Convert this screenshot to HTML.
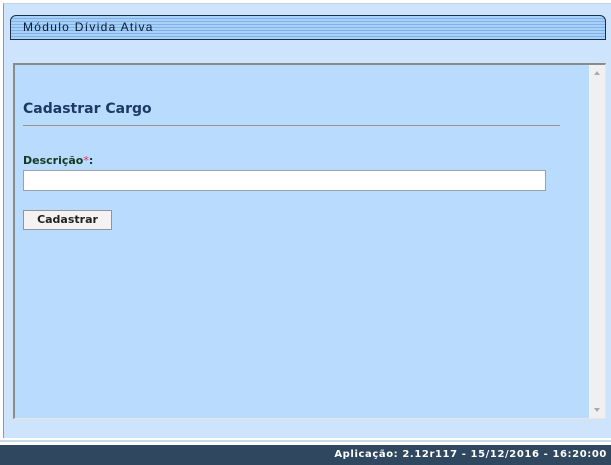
<html><head><style>
body{margin:0;width:611px;height:465px;background:#fff;position:relative;overflow:hidden;font-family:"Liberation Sans",sans-serif}
.outer{position:absolute;left:3px;top:3px;width:620px;height:434px;background:#cde4fc;border-left:1px solid #8a9bb0;border-top:1px solid #c0d8ea}
.hdr{position:absolute;left:10px;top:15px;width:594px;height:23px;border:1px solid #1b2f4a;border-radius:6px 6px 0 0;background:repeating-linear-gradient(#a9d0f6 0,#a9d0f6 2px,#7fb2e8 2px,#7fb2e8 3px)}
.hdr span{position:absolute;left:12px;top:4px;font-size:12px;letter-spacing:1.3px;color:#0a1a33}
.frame{position:absolute;left:13px;top:63px;width:590px;height:353px;background:#b9dbfd;border-left:2px solid #8b8b8b;border-top:2px solid #8b8b8b;border-right:1px solid #e6e6e6;border-bottom:1px solid #e6e6e6}
.sb{position:absolute;right:0;top:0;width:16px;height:353px;background:#f0f0f0}
h1{position:absolute;left:8px;top:36px;margin:0;font-family:"DejaVu Sans",sans-serif;font-size:14px;color:#1b3b63;font-weight:bold}
.hr{position:absolute;left:8px;top:60px;width:537px;height:1px;background:#8e969e;border-bottom:1px solid #d0d8e0}
.lbl{position:absolute;left:8px;top:89px;font-family:"DejaVu Sans",sans-serif;font-size:11px;font-weight:bold;color:#13391f}
.lbl i{color:#e0305a;font-style:normal;font-weight:normal}
.inp{position:absolute;left:8px;top:105px;width:521px;height:19px;background:#fff;border:1px solid #9aa3ad}
.btn{position:absolute;left:8px;top:145px;width:87px;height:18px;background:#f4f2f2;border:1px solid #8f959b;font-family:"DejaVu Sans",sans-serif;font-size:11px;font-weight:bold;color:#222;text-align:center;line-height:18px}
.foot{position:absolute;left:0;top:445px;width:607px;height:20px;padding-right:4px;background:#2f475f;color:#fff;font-family:"DejaVu Sans",sans-serif;font-size:10px;font-weight:bold;letter-spacing:0.6px;text-align:right;line-height:20px}
.fl{position:absolute;left:0;top:438px;width:611px;height:7px;background:linear-gradient(#fff 0,#fff 2px,#c8dbe8 2px,#c8dbe8 4px,#fff 4px)}
</style></head><body>
<div class="outer"></div>
<div class="hdr"><span>Módulo Dívida Ativa</span></div>
<div class="frame">
<div class="sb"><div style="position:absolute;left:5px;top:6px;border:3px solid transparent;border-bottom:4px solid #aaa;border-top:0"></div><div style="position:absolute;left:5px;bottom:6px;border:3px solid transparent;border-top:4px solid #aaa;border-bottom:0"></div></div>
<h1>Cadastrar Cargo</h1><div class="hr"></div>
<div class="lbl">Descrição<i>*</i>:</div>
<div class="inp"></div>
<div class="btn">Cadastrar</div>
</div>
<div class="fl"></div>
<div class="foot">Aplicação: 2.12r117 - 15/12/2016 - 16:20:00</div>
</body></html>
